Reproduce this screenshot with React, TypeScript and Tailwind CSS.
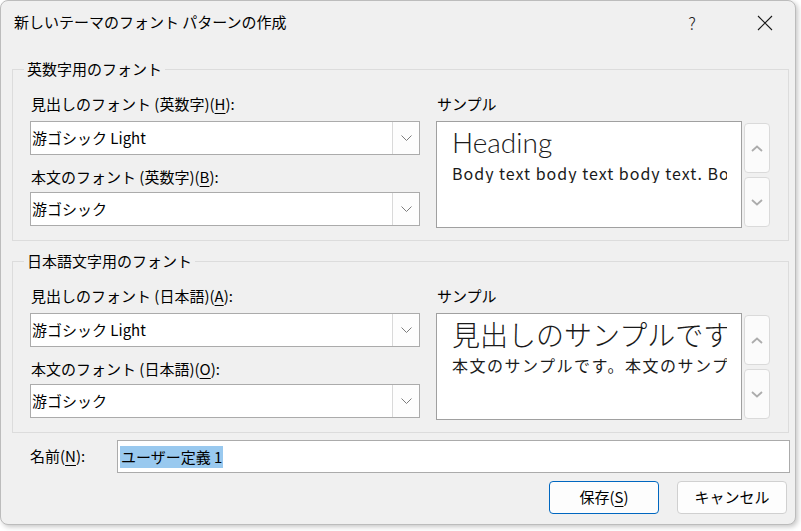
import React from "react";

const ui = "font-['Noto_Sans_CJK_JP','Noto_Sans',sans-serif]";

function Mn({ children }: { children: React.ReactNode }) {
  return <span className="underline underline-offset-[3px] decoration-1">{children}</span>;
}

function Combo({ value }: { value: string }) {
  return (
    <div className="flex h-[34px] w-[390px] items-stretch border border-[#ababab] bg-white">
      <div className="flex flex-1 items-center pl-[1px] text-[15px] text-black">{value}</div>
      <div className="flex w-[27px] items-center justify-center border-l border-[#d9d9d9] bg-[#fdfdfd]">
        <svg width="11" height="6" viewBox="0 0 11 6">
          <path d="M0.5 0.5 L5.5 5.5 L10.5 0.5" fill="none" stroke="#7c7c7c" strokeWidth="1" />
        </svg>
      </div>
    </div>
  );
}

function ScrollBtn({ up }: { up?: boolean }) {
  return (
    <div className="flex h-[50px] w-[26px] items-center justify-center rounded-[4px] border border-[#dadada] bg-[#fbfbfb]">
      <svg width="12" height="7" viewBox="0 0 12 7">
        <path
          d={up ? "M1 6 L6 1.5 L11 6" : "M1 1 L6 5.5 L11 1"}
          fill="none"
          stroke="#acacac"
          strokeWidth="1.8"
        />
      </svg>
    </div>
  );
}

function Sample({
  heading,
  headFont,
  body,
  bodyTrack,
}: {
  heading: string;
  headFont: string;
  body: string;
  bodyTrack: string;
}) {
  return (
    <div className="flex gap-[2px]">
      <div className="h-[107px] w-[306px] border border-[#a0a0a0] bg-white pl-[15px] pr-[14px] pt-[4px]">
        <div className={`overflow-hidden whitespace-nowrap text-[28px] font-light leading-[32px] text-[#1a1a1a] ${headFont}`}>
          {heading}
        </div>
        <div className={`mt-[5px] overflow-hidden whitespace-nowrap text-[16px] leading-[20px] text-[#1a1a1a] ${bodyTrack}`}>
          {body}
        </div>
      </div>
      <div className="flex flex-col gap-[4px] pt-[2px]">
        <ScrollBtn up />
        <ScrollBtn />
      </div>
    </div>
  );
}

function Group({
  legend,
  headLabel,
  bodyLabel,
  heading,
  headFont,
  body,
  bodyTrack,
}: {
  legend: string;
  headLabel: React.ReactNode;
  bodyLabel: React.ReactNode;
  heading: string;
  headFont: string;
  body: string;
  bodyTrack: string;
}) {
  return (
    <fieldset className="ml-[11px] w-[777px] border border-[#dcdcdc] pb-[12px] pl-[17px] pr-[17px]">
      <legend className="-ml-[6px] px-[3px] text-[15px] leading-[20px]">{legend}</legend>
      <div className="flex gap-[16px]">
        <div className="flex w-[390px] flex-col">
          <div className="mt-[15px] h-[20px] pl-[1px] text-[15px] leading-[20px]">{headLabel}</div>
          <div className="mt-[7px]">
            <Combo value="游ゴシック Light" />
          </div>
          <div className="mt-[12px] h-[20px] pl-[1px] text-[15px] leading-[20px]">{bodyLabel}</div>
          <div className="mt-[5px]">
            <Combo value="游ゴシック" />
          </div>
        </div>
        <div className="flex flex-col">
          <div className="mt-[15px] h-[20px] pl-[1px] text-[15px] leading-[20px]">サンプル</div>
          <div className="mt-[7px]">
            <Sample heading={heading} headFont={headFont} body={body} bodyTrack={bodyTrack} />
          </div>
        </div>
      </div>
    </fieldset>
  );
}

export default function App() {
  return (
    <div className={`h-[531px] w-[801px] bg-white ${ui}`}>
      <div className="h-[525px] w-[796px] overflow-hidden rounded-[8px] border border-[#bcbcbc] bg-[#f0f0f0] text-black shadow-[2px_2px_5px_rgba(0,0,0,0.22)]">
        <div className="flex h-[43px] items-center">
          <div className="pl-[13px] text-[15px]">新しいテーマのフォント パターンの作成</div>
          <div className="ml-auto flex h-full w-[46px] items-center justify-center text-[17px] font-light text-[#222]">
            ?
          </div>
          <div className="ml-[27px] mr-[7px] flex h-full w-[46px] items-center justify-center">
            <svg width="16" height="16" viewBox="0 0 16 16">
              <path d="M1 1 L15 15 M15 1 L1 15" stroke="#1a1a1a" strokeWidth="1.1" />
            </svg>
          </div>
        </div>

        <div className="mt-[15px]">
          <Group
            legend="英数字用のフォント"
            headLabel={
              <>
                見出しのフォント (英数字)(<Mn>H</Mn>):
              </>
            }
            bodyLabel={
              <>
                本文のフォント (英数字)(<Mn>B</Mn>):
              </>
            }
            heading="Heading"
            headFont="font-['Lato','Noto_Sans_CJK_JP',sans-serif]"
            body="Body text body text body text. Body text body text."
            bodyTrack="tracking-[1px]"
          />
        </div>

        <div className="mt-[10px]">
          <Group
            legend="日本語文字用のフォント"
            headLabel={
              <>
                見出しのフォント (日本語)(<Mn>A</Mn>):
              </>
            }
            bodyLabel={
              <>
                本文のフォント (日本語)(<Mn>O</Mn>):
              </>
            }
            heading="見出しのサンプルです"
            headFont="font-['Noto_Sans_CJK_JP_Light','Noto_Sans_CJK_JP',sans-serif]"
            body="本文のサンプルです。本文のサンプルです。"
            bodyTrack="tracking-[1.5px]"
          />
        </div>

        <div className="mt-[7px] flex items-center">
          <div className="ml-[29px] w-[87px] text-[15px]">
            名前(<Mn>N</Mn>):
          </div>
          <div className="flex h-[33px] w-[673px] items-center border border-[#ababab] bg-white pl-[2px]">
            <span className="bg-[#99c9ef] px-[1px] text-[15px] leading-[22px]">ユーザー定義 1</span>
          </div>
        </div>

        <div className="mt-[8px] flex justify-end gap-[18px] pr-[8px]">
          <button className="flex h-[33px] w-[110px] items-center justify-center rounded-[4px] border border-[#0067c0] bg-[#fdfdfd] text-[15px]">
            保存(<Mn>S</Mn>)
          </button>
          <button className="flex h-[33px] w-[110px] items-center justify-center rounded-[4px] border border-[#d0d0d0] bg-[#fdfdfd] text-[15px]">
            キャンセル
          </button>
        </div>
      </div>
    </div>
  );
}
